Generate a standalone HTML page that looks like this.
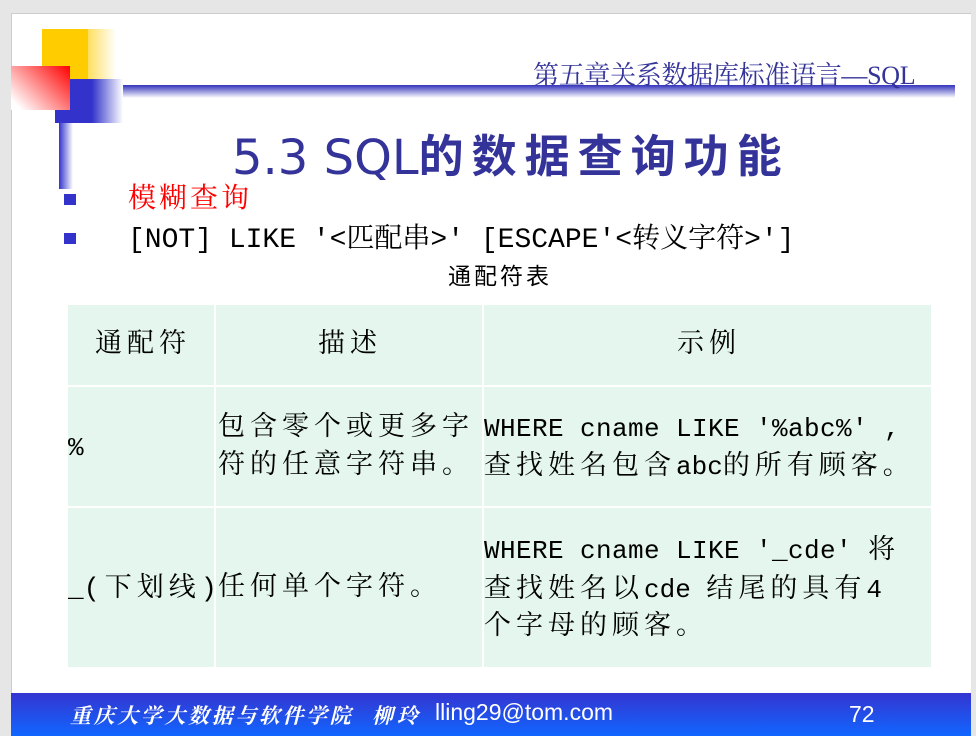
<!DOCTYPE html>
<html><head><meta charset="utf-8"><style>
*{margin:0;padding:0;box-sizing:border-box}
body{width:976px;height:736px;background:#e6e6e6;position:relative;overflow:hidden;font-family:"Liberation Sans","Noto Sans CJK SC",sans-serif}
.slide{position:absolute;left:11px;top:13px;width:960px;height:723px;background:#fff;border-left:1px solid #ccc;border-top:1px solid #ccc}
.a{position:absolute}
.bg{position:absolute;background:#e4f6ee}
.t{position:absolute;white-space:nowrap;font-family:"Liberation Mono","Noto Serif CJK SC",monospace;font-size:26px;color:#000;line-height:38px}
.c{letter-spacing:5px;font-size:27px}
.l{letter-spacing:0.4px}
</style></head><body>
<div class="slide"></div>
<div class="a" style="left:42px;top:29px;width:46px;height:50px;background:#ffcc00"></div>
<div class="a" style="left:88px;top:29px;width:28px;height:50px;background:linear-gradient(90deg,#ffdf60,#fff)"></div>
<div class="a" style="left:55px;top:79px;width:37px;height:44px;background:#3333cc"></div>
<div class="a" style="left:92px;top:79px;width:31px;height:44px;background:linear-gradient(90deg,#3333cc,#fff)"></div>
<div class="a" style="left:11px;top:66px;width:59px;height:44px;background:linear-gradient(225deg,#ff0000,#fff 90%)"></div>
<div class="a" style="left:123px;top:85px;width:832px;height:13px;background:linear-gradient(180deg,#3333bb,#fff)"></div>
<div class="a" style="left:59px;top:123px;width:14px;height:66px;background:linear-gradient(90deg,#3333cc,#fff)"></div>
<div class="a" style="left:533px;top:55px;font-family:'Liberation Serif','Noto Serif CJK SC',serif;font-size:26px;color:#333399;white-space:nowrap;letter-spacing:-0.3px">第五章关系数据库标准语言—SQL</div>
<div class="a" style="left:232px;top:122px;font-size:48px;color:#333399;white-space:nowrap;font-family:'DejaVu Sans',sans-serif">5.3 SQL<span style="font-family:'Noto Sans CJK SC',sans-serif;font-weight:bold;font-size:45px;letter-spacing:8px;position:relative;top:-2px">的数据查询功能</span></div>
<div class="a" style="left:64px;top:194px;width:12px;height:11px;background:#3333cc"></div>
<div class="a" style="left:64px;top:233px;width:12px;height:11px;background:#3333cc"></div>
<div class="a" style="left:128px;top:176px;font-size:28px;color:#ff0000;font-family:'Liberation Mono','Noto Serif CJK SC',monospace;letter-spacing:3px">模糊查询</div>
<div class="a" style="left:128px;top:216px;font-size:28px;color:#000;font-family:'Liberation Mono','Noto Serif CJK SC',monospace;white-space:nowrap">[NOT] LIKE '&lt;匹配串&gt;' [ESCAPE'&lt;转义字符&gt;']</div>
<div class="a" style="left:448px;top:257px;font-size:23px;color:#000;font-family:'Noto Sans CJK SC',sans-serif;letter-spacing:3px">通配符表</div>
<div class="bg" style="left:68px;top:305px;width:146px;height:80px"></div>
<div class="bg" style="left:216px;top:305px;width:266px;height:80px"></div>
<div class="bg" style="left:484px;top:305px;width:447px;height:80px"></div>
<div class="bg" style="left:68px;top:387px;width:146px;height:119px"></div>
<div class="bg" style="left:216px;top:387px;width:266px;height:119px"></div>
<div class="bg" style="left:484px;top:387px;width:447px;height:119px"></div>
<div class="bg" style="left:68px;top:508px;width:146px;height:159px"></div>
<div class="bg" style="left:216px;top:508px;width:266px;height:159px"></div>
<div class="bg" style="left:484px;top:508px;width:447px;height:159px"></div>
<div class="t c" style="left:95px;top:327px">通配符</div>
<div class="t c" style="left:318px;top:327px">描述</div>
<div class="t c" style="left:677px;top:327px">示例</div>
<div class="t" style="left:68px;top:429px">%</div>
<div class="t c" style="left:218px;top:410px">包含零个或更多字</div>
<div class="t c" style="left:218px;top:448px">符的任意字符串。</div>
<div class="t l" style="left:484px;top:410px">WHERE cname LIKE '%abc%' ,</div>
<div class="t" style="left:484px;top:448px"><span class="c">查找姓名包含</span>abc<span class="c">的所有顾客。</span></div>
<div class="t" style="left:68px;top:570px">_<span class="c">(下划线)</span></div>
<div class="t c" style="left:218px;top:570px">任何单个字符。</div>
<div class="t l" style="left:484px;top:532px">WHERE cname LIKE '_cde' <span class="c">将</span></div>
<div class="t" style="left:484px;top:571px"><span class="c">查找姓名以</span>cde <span class="c">结尾的具有</span>4</div>
<div class="t c" style="left:484px;top:609px">个字母的顾客。</div>
<div class="a" style="left:11px;top:693px;width:960px;height:43px;background:linear-gradient(180deg,#3535d0,#1066ff)"></div>
<div class="a" style="left:70px;top:700px;font-size:21px;color:#fff;font-style:italic;font-weight:bold;font-family:'Noto Serif CJK SC',serif;white-space:nowrap;letter-spacing:2.6px">重庆大学大数据与软件学院</div>
<div class="a" style="left:372px;top:700px;font-size:21px;color:#fff;font-style:italic;font-weight:bold;font-family:'Noto Serif CJK SC',serif;white-space:nowrap;letter-spacing:4px">柳玲</div>
<div class="a" style="left:435px;top:699px;font-size:23px;color:#fff;white-space:nowrap">lling29@tom.com</div>
<div class="a" style="left:849px;top:701px;font-size:23px;color:#fff">72</div>
</body></html>
